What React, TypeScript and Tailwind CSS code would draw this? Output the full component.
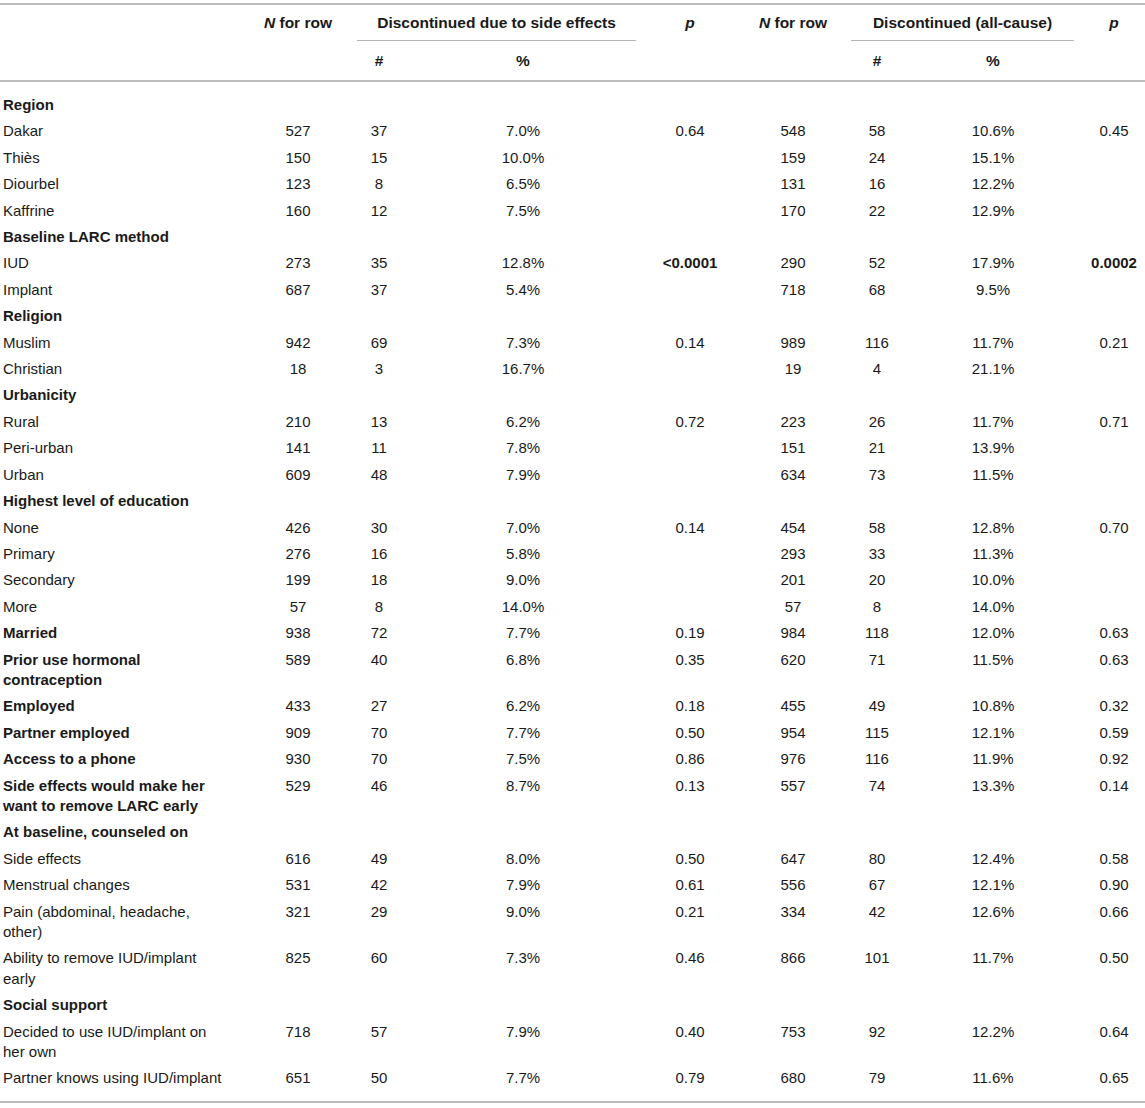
import React from "react";

type Row = {
  label: string;
  kind: "h" | "b" | "n";
  v?: string[];
  bold?: number[];
};

const rows: Row[] = [
  { label: "Region", kind: "h" },
  { label: "Dakar", kind: "n", v: ["527", "37", "7.0%", "0.64", "548", "58", "10.6%", "0.45"] },
  { label: "Thiès", kind: "n", v: ["150", "15", "10.0%", "", "159", "24", "15.1%", ""] },
  { label: "Diourbel", kind: "n", v: ["123", "8", "6.5%", "", "131", "16", "12.2%", ""] },
  { label: "Kaffrine", kind: "n", v: ["160", "12", "7.5%", "", "170", "22", "12.9%", ""] },
  { label: "Baseline LARC method", kind: "h" },
  { label: "IUD", kind: "n", v: ["273", "35", "12.8%", "<0.0001", "290", "52", "17.9%", "0.0002"], bold: [3, 7] },
  { label: "Implant", kind: "n", v: ["687", "37", "5.4%", "", "718", "68", "9.5%", ""] },
  { label: "Religion", kind: "h" },
  { label: "Muslim", kind: "n", v: ["942", "69", "7.3%", "0.14", "989", "116", "11.7%", "0.21"] },
  { label: "Christian", kind: "n", v: ["18", "3", "16.7%", "", "19", "4", "21.1%", ""] },
  { label: "Urbanicity", kind: "h" },
  { label: "Rural", kind: "n", v: ["210", "13", "6.2%", "0.72", "223", "26", "11.7%", "0.71"] },
  { label: "Peri-urban", kind: "n", v: ["141", "11", "7.8%", "", "151", "21", "13.9%", ""] },
  { label: "Urban", kind: "n", v: ["609", "48", "7.9%", "", "634", "73", "11.5%", ""] },
  { label: "Highest level of education", kind: "h" },
  { label: "None", kind: "n", v: ["426", "30", "7.0%", "0.14", "454", "58", "12.8%", "0.70"] },
  { label: "Primary", kind: "n", v: ["276", "16", "5.8%", "", "293", "33", "11.3%", ""] },
  { label: "Secondary", kind: "n", v: ["199", "18", "9.0%", "", "201", "20", "10.0%", ""] },
  { label: "More", kind: "n", v: ["57", "8", "14.0%", "", "57", "8", "14.0%", ""] },
  { label: "Married", kind: "b", v: ["938", "72", "7.7%", "0.19", "984", "118", "12.0%", "0.63"] },
  { label: "Prior use hormonal contraception", kind: "b", v: ["589", "40", "6.8%", "0.35", "620", "71", "11.5%", "0.63"] },
  { label: "Employed", kind: "b", v: ["433", "27", "6.2%", "0.18", "455", "49", "10.8%", "0.32"] },
  { label: "Partner employed", kind: "b", v: ["909", "70", "7.7%", "0.50", "954", "115", "12.1%", "0.59"] },
  { label: "Access to a phone", kind: "b", v: ["930", "70", "7.5%", "0.86", "976", "116", "11.9%", "0.92"] },
  { label: "Side effects would make her want to remove LARC early", kind: "b", v: ["529", "46", "8.7%", "0.13", "557", "74", "13.3%", "0.14"] },
  { label: "At baseline, counseled on", kind: "h" },
  { label: "Side effects", kind: "n", v: ["616", "49", "8.0%", "0.50", "647", "80", "12.4%", "0.58"] },
  { label: "Menstrual changes", kind: "n", v: ["531", "42", "7.9%", "0.61", "556", "67", "12.1%", "0.90"] },
  { label: "Pain (abdominal, headache, other)", kind: "n", v: ["321", "29", "9.0%", "0.21", "334", "42", "12.6%", "0.66"] },
  { label: "Ability to remove IUD/implant early", kind: "n", v: ["825", "60", "7.3%", "0.46", "866", "101", "11.7%", "0.50"] },
  { label: "Social support", kind: "h" },
  { label: "Decided to use IUD/implant on her own", kind: "n", v: ["718", "57", "7.9%", "0.40", "753", "92", "12.2%", "0.64"] },
  { label: "Partner knows using IUD/implant", kind: "n", v: ["651", "50", "7.7%", "0.79", "680", "79", "11.6%", "0.65"] },
];

const GRID = "grid grid-cols-[239px_118px_44px_244px_90px_116px_52px_180px_62px]";

export default function App() {
  return (
    <div
      className="w-[1145px] bg-white text-[15px] text-[#1a1a1a]"
      style={{ fontFamily: '"Liberation Sans", Arial, Helvetica, sans-serif' }}
    >
      <div className="mt-[3px] border-t-2 border-[#bdbdbd]">
        {/* Header row 1 */}
        <div className={`${GRID} text-[15.5px] font-bold leading-[20px]`}>
          <div />
          <div className="pt-[8px] pb-[7px] text-center">
            <i>N</i> for row
          </div>
          <div className="col-span-2 mr-[9px] border-b border-[#b5b5b5] pt-[8px] pb-[7px] text-center">
            Discontinued due to side effects
          </div>
          <div className="pt-[8px] pb-[7px] text-center">
            <i>p</i>
          </div>
          <div className="pt-[8px] pb-[7px] text-center">
            <i>N</i> for row
          </div>
          <div className="col-span-2 mr-[9px] border-b border-[#b5b5b5] pt-[8px] pb-[7px] text-center">
            Discontinued (all-cause)
          </div>
          <div className="pt-[8px] pb-[7px] text-center">
            <i>p</i>
          </div>
        </div>
        {/* Header row 2 */}
        <div className={`${GRID} border-b-2 border-[#bdbdbd] text-[15.5px] font-bold leading-[20px]`}>
          <div />
          <div />
          <div className="pt-[10px] pb-[9px] text-center">#</div>
          <div className="pt-[10px] pb-[9px] text-center">%</div>
          <div />
          <div />
          <div className="pt-[10px] pb-[9px] text-center">#</div>
          <div className="pt-[10px] pb-[9px] text-center">%</div>
          <div />
        </div>
        {/* Body */}
        <div className="border-b-2 border-[#bdbdbd] pt-[10px] pb-[9px] leading-[20.4px]">
          {rows.map((r, i) => (
            <div key={i} className={`${GRID} py-[3px]`}>
              <div className={`pl-[3px] pr-[12px] ${r.kind === "n" ? "" : "font-bold"}`}>{r.label}</div>
              {r.kind !== "h" && r.v
                ? r.v.map((val, j) => (
                    <div
                      key={j}
                      className={`text-center ${r.bold && r.bold.includes(j) ? "font-bold" : ""}`}
                    >
                      {val}
                    </div>
                  ))
                : null}
            </div>
          ))}
        </div>
      </div>
    </div>
  );
}
